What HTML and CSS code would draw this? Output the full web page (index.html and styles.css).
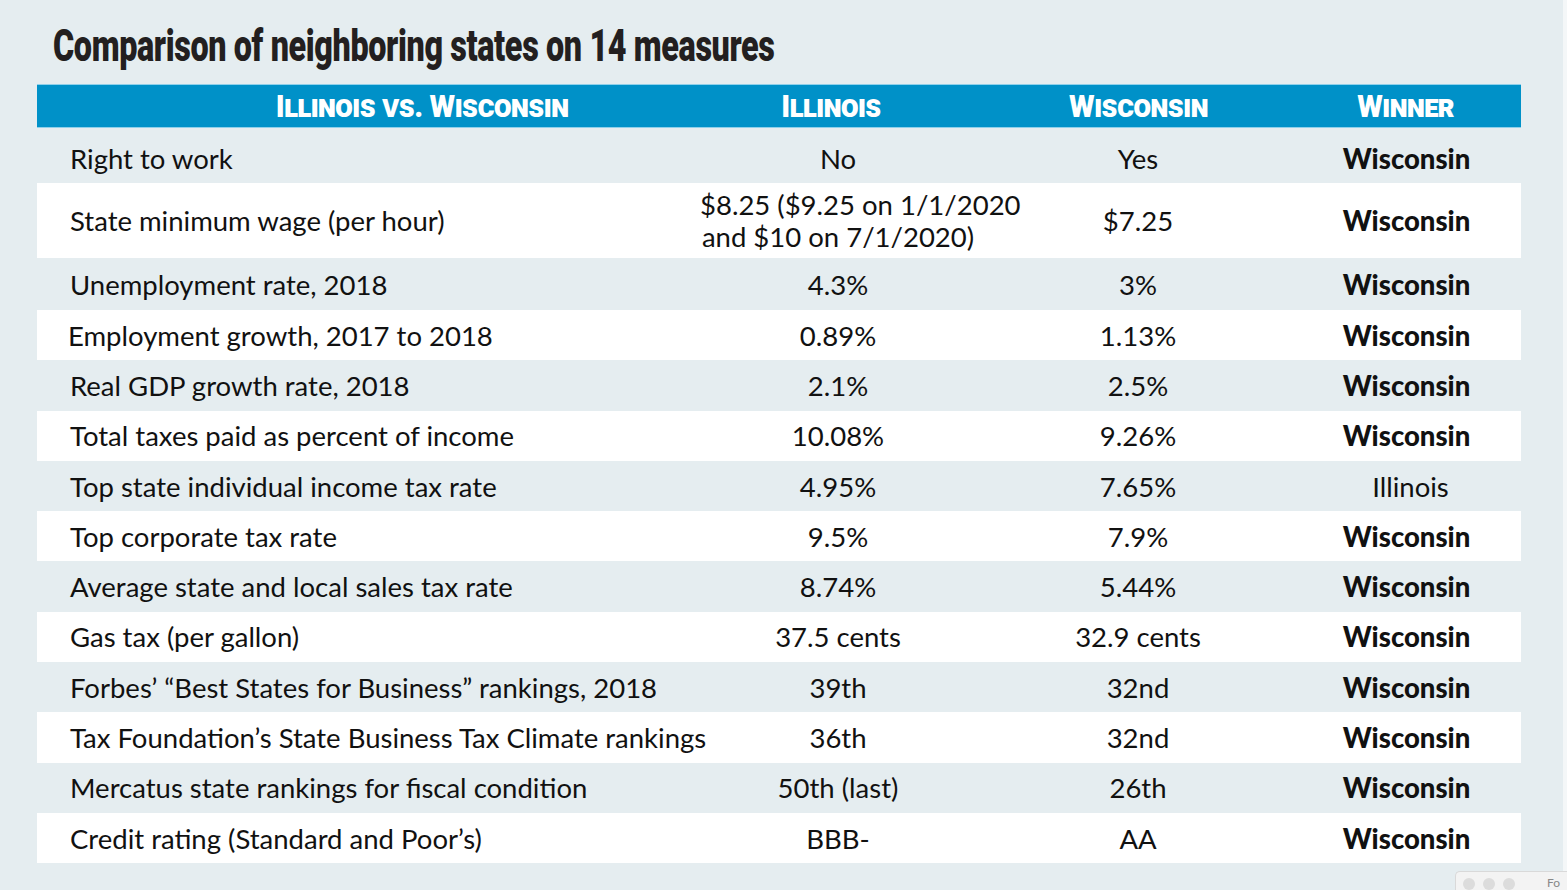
FILE: index.html
```html
<!DOCTYPE html>
<html>
<head>
<meta charset="utf-8">
<link rel="stylesheet" href="styles.css">
</head>
<body>
<div class="page">
  <h1 class="title"><span>Comparison of neighboring states on 14 measures</span></h1>
  <div class="table">
    <div class="row head">
      <div class="c c1"><span>Illinois vs. Wisconsin</span></div>
      <div class="c c2"><span>Illinois</span></div>
      <div class="c c3"><span>Wisconsin</span></div>
      <div class="c c4"><span>Winner</span></div>
    </div>
    <div class="row tint r1">
      <div class="c c1">Right to work</div><div class="c c2">No</div><div class="c c3">Yes</div><div class="c c4 b">Wisconsin</div>
    </div>
    <div class="row r2">
      <div class="c c1">State minimum wage (per hour)</div><div class="c c2">$8.25 ($9.25 on 1/1/2020<br>and $10 on 7/1/2020)</div><div class="c c3">$7.25</div><div class="c c4 b">Wisconsin</div>
    </div>
    <div class="row tint r3">
      <div class="c c1">Unemployment rate, 2018</div><div class="c c2">4.3%</div><div class="c c3">3%</div><div class="c c4 b">Wisconsin</div>
    </div>
    <div class="row">
      <div class="c c1 shift">Employment growth, 2017 to 2018</div><div class="c c2">0.89%</div><div class="c c3">1.13%</div><div class="c c4 b">Wisconsin</div>
    </div>
    <div class="row tint">
      <div class="c c1">Real GDP growth rate, 2018</div><div class="c c2">2.1%</div><div class="c c3">2.5%</div><div class="c c4 b">Wisconsin</div>
    </div>
    <div class="row">
      <div class="c c1">Total taxes paid as percent of income</div><div class="c c2">10.08%</div><div class="c c3">9.26%</div><div class="c c4 b">Wisconsin</div>
    </div>
    <div class="row tint">
      <div class="c c1">Top state individual income tax rate</div><div class="c c2">4.95%</div><div class="c c3">7.65%</div><div class="c c4">Illinois</div>
    </div>
    <div class="row">
      <div class="c c1">Top corporate tax rate</div><div class="c c2">9.5%</div><div class="c c3">7.9%</div><div class="c c4 b">Wisconsin</div>
    </div>
    <div class="row tint">
      <div class="c c1">Average state and local sales tax rate</div><div class="c c2">8.74%</div><div class="c c3">5.44%</div><div class="c c4 b">Wisconsin</div>
    </div>
    <div class="row">
      <div class="c c1">Gas tax (per gallon)</div><div class="c c2">37.5 cents</div><div class="c c3">32.9 cents</div><div class="c c4 b">Wisconsin</div>
    </div>
    <div class="row tint">
      <div class="c c1">Forbes’ “Best States for Business” rankings, 2018</div><div class="c c2">39th</div><div class="c c3">32nd</div><div class="c c4 b">Wisconsin</div>
    </div>
    <div class="row">
      <div class="c c1">Tax Foundation’s State Business Tax Climate rankings</div><div class="c c2">36th</div><div class="c c3">32nd</div><div class="c c4 b">Wisconsin</div>
    </div>
    <div class="row tint">
      <div class="c c1">Mercatus state rankings for fiscal condition</div><div class="c c2">50th (last)</div><div class="c c3">26th</div><div class="c c4 b">Wisconsin</div>
    </div>
    <div class="row">
      <div class="c c1">Credit rating (Standard and Poor’s)</div><div class="c c2">BBB-</div><div class="c c3">AA</div><div class="c c4 b">Wisconsin</div>
    </div>
  </div>
  <div class="edge"></div>
  <div class="miniwin">
    <span class="dot"></span><span class="dot"></span><span class="dot"></span>
    <span class="mt">Fo</span>
  </div>
</div>
</body>
</html>
```

FILE: styles.css
```css
html, body {
  margin: 0;
  padding: 0;
  background: #e5edf0;
}
.page {
  position: relative;
  width: 1567px;
  height: 890px;
  overflow: hidden;
  background: #e5edf0;
  padding: 0 0 0 37px;
  box-sizing: border-box;
}
.title {
  margin: 0;
  height: 84px;
  box-sizing: border-box;
  padding-top: 22px;
  padding-left: 16px;
  font-family: "Roboto", "Liberation Sans", sans-serif;
  font-weight: 900;
  font-size: 44px;
  line-height: 48px;
  color: #231f20;
  letter-spacing: -0.5px;
  white-space: nowrap;
}
.title span {
  display: inline-block;
  transform: scaleX(0.735);
  transform-origin: 0 50%;
}
.table {
  width: 1484px;
  font-family: "Lato", "Liberation Sans", sans-serif;
  font-size: 27.5px;
  color: #111;
}
.row {
  display: grid;
  grid-template-columns: 663px 276px 324px 221px;
  height: 50.3px;
  background: #ffffff;
  align-items: center;
  padding-top: 0;
  box-sizing: border-box;
}
.row.tint { background: #e5edf0; }
.row.r1 { height: 55px; padding-top: 6px; }
.row.r2 { height: 75px; line-height: 32px; padding-top: 0; }
.row.r3 { height: 52px; }
.c { text-align: center; white-space: nowrap; }
.c1 { text-align: left; padding-left: 33px; }
.c1.shift { padding-left: 31px; }
.c4.b { padding-right: 8px; }
.b { font-weight: 900; }
.row.head {
  height: 44px;
  padding-top: 0;
  background: #0091c8;
  border-top: 1px solid #8fd0ea;
  border-bottom: 1px solid #8fd0ea;
  color: #ffffff;
  font-family: "Roboto", "Liberation Sans", sans-serif;
  font-weight: 900;
  font-variant: small-caps;
  font-size: 32px;
  letter-spacing: -0.5px;
}
.row.head .c span {
  display: inline-block;
  transform: scaleX(0.92);
}
.row.head .c1 { text-align: center; padding-left: 107px; }
.row.head .c2 { padding-right: 14px; }
.row.head .c4 { padding-right: 10px; }
.edge {
  position: absolute;
  top: 0;
  right: 0;
  width: 4px;
  height: 890px;
  background: #f4f7f8;
}
.miniwin {
  position: absolute;
  left: 1455px;
  top: 871px;
  width: 112px;
  height: 19px;
  background: #f3f3f3;
  border-top: 1px solid #d9d9d9;
  border-left: 1px solid #d9d9d9;
  border-radius: 5px 0 0 0;
  display: flex;
  align-items: flex-start;
  padding: 6px 0 0 7px;
  gap: 8px;
  box-sizing: border-box;
}
.dot {
  width: 12px;
  height: 12px;
  border-radius: 50%;
  background: #dcdcdc;
}
.mt {
  margin-left: 24px;
  margin-top: -1px;
  font-family: "Lato", "Liberation Sans", sans-serif;
  font-size: 12px;
  line-height: 12px;
  color: #888;
}
```
